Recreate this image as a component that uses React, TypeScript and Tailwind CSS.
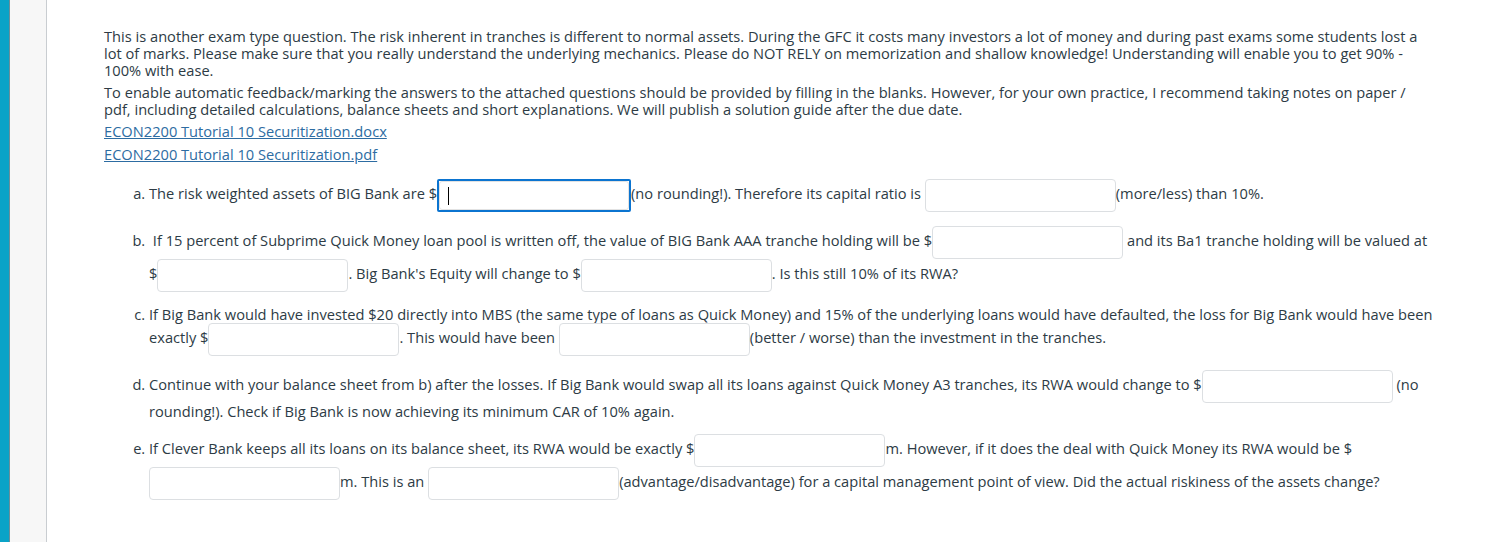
import React from "react";

const Blank = ({ w = 191 }: { w?: number }) => (
  <input
    type="text"
    className="inline-block align-middle h-[33px] border border-[#dcdfe2] rounded-[4px] bg-white outline-none"
    style={{ width: w }}
  />
);

const FocusBlank = () => (
  <span className="relative inline-block align-middle h-[33px] w-[194px] border-2 border-[#0b74d0] rounded-[2px] bg-white">
    <span className="block h-full w-full border border-[#e2e2e2] rounded-[3px]" />
    <span className="absolute left-[9px] top-[6px] h-[18px] w-px bg-black" />
  </span>
);

export default function App() {
  return (
    <div className="flex min-h-[542px] w-full bg-white text-[#2d3b45] text-[14.65px] leading-[17px] [font-family:'Open_Sans','Noto_Sans',sans-serif]">
      <div className="w-[10px] shrink-0 bg-[#0aa3c7] border-r border-[#6b8e99]" />
      <div className="w-[37px] shrink-0 bg-[#f7f7f7] border-r border-[#c9cdd1]" />
      <div className="w-[1331px] pl-[57px] pt-[28px] box-content">
        <p className="mb-[5px]">
          This is another exam type question. The risk inherent in tranches is different to normal assets. During the GFC it costs many investors a lot of money and during past exams some students lost a lot of marks. Please make sure that you really understand the underlying mechanics. Please do NOT RELY on memorization and shallow knowledge! Understanding will enable you to get 90% - 100% with ease.
        </p>
        <p className="mb-[5px]">
          To enable automatic feedback/marking the answers to the attached questions should be provided by filling in the blanks. However, for your own practice, I recommend taking notes on paper / pdf, including detailed calculations, balance sheets and short explanations. We will publish a solution guide after the due date.
        </p>
        <p className="mb-[6px]">
          <a href="#" className="text-[#2d6ca2] underline">ECON2200 Tutorial 10 Securitization.docx</a>
        </p>
        <p>
          <a href="#" className="text-[#2d6ca2] underline">ECON2200 Tutorial 10 Securitization.pdf</a>
        </p>
        <ol className="list-[lower-alpha] pl-[45px] mt-[16px]">
          <li className="mb-[14px]">
            The risk weighted assets of BIG Bank are $<FocusBlank />(no rounding!). Therefore its capital ratio is <Blank />(more/less) than 10%.
          </li>
          <li className="mb-[14px]">
            {"\u00a0"}If 15 percent of Subprime Quick Money loan pool is written off, the value of BIG Bank AAA tranche holding will be $<Blank /> and its Ba1 tranche holding will be valued at $<Blank />. Big Bank's Equity will change to $<Blank />. Is this still 10% of its RWA?
          </li>
          <li className="mb-[14px]">
            If Big Bank would have invested $20 directly into MBS (the same type of loans as Quick Money) and 15% of the underlying loans would have defaulted, the loss for Big Bank would have been exactly $<Blank />. This would have been <Blank />(better / worse) than the investment in the tranches.
          </li>
          <li className="mb-[14px]">
            Continue with your balance sheet from b) after the losses. If Big Bank would swap all its loans against Quick Money A3 tranches, its RWA would change to $<Blank /> (no rounding!). Check if Big Bank is now achieving its minimum CAR of 10% again.
          </li>
          <li className="mb-[14px]">
            If Clever Bank keeps all its loans on its balance sheet, its RWA would be exactly $<Blank />m. However, if it does the deal with Quick Money its RWA would be $ <Blank />m. This is an <Blank />(advantage/disadvantage) for a capital management point of view. Did the actual riskiness of the assets change?
          </li>
        </ol>
      </div>
    </div>
  );
}
